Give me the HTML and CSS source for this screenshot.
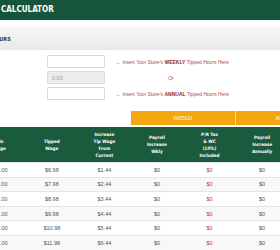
FILE: index.html
```html
<!DOCTYPE html>
<html>
<head>
<meta charset="utf-8">
<link rel="stylesheet" href="styles.css">
</head>
<body>
<div class="page">
  <header class="topbar"><h1 class="title">CALCULATOR</h1></header>
  <section class="band"><h2 class="band-title">HOURS</h2></section>
  <form class="hours">
    <div class="row">
      <input class="field" type="text">
      <span class="hint">&larr; Insert Your Store's <b>WEEKLY</b> Tipped Hours Here</span>
    </div>
    <div class="row">
      <input class="field disabled" type="text" value="0.00" disabled>
      <span class="hint or">Or</span>
    </div>
    <div class="row">
      <input class="field" type="text">
      <span class="hint">&larr; Insert Your Store's <b>ANNUAL</b> Tipped Hours Here</span>
    </div>
  </form>
  <table class="calc">
    <colgroup><col><col><col><col><col><col><col></colgroup>
    <thead>
      <tr class="groups">
        <th class="blank" colspan="3"></th>
        <th class="grp weekly" colspan="2">WEEKLY</th>
        <th class="grp" colspan="2">ANNUALLY</th>
      </tr>
      <tr class="heads">
        <th>Min<br>Wage</th>
        <th>Tipped<br>Wage</th>
        <th>Increase<br>Tip Wage<br>From<br>Current</th>
        <th>Payroll<br>Increase<br>Wkly</th>
        <th>P/R Tax<br>&amp; WC<br>(10%)<br>Included</th>
        <th>Payroll<br>Increase<br>Annually</th>
        <th>P/R Tax<br>&amp; WC<br>(10%)<br>Included</th>
      </tr>
    </thead>
    <tbody>
      <tr><td>$10.00</td><td>$6.98</td><td>$1.44</td><td>$0</td><td class="red">$0</td><td>$0</td><td class="red">$0</td></tr>
      <tr><td>$11.00</td><td>$7.98</td><td>$2.44</td><td>$0</td><td class="red">$0</td><td>$0</td><td class="red">$0</td></tr>
      <tr><td>$12.00</td><td>$8.98</td><td>$3.44</td><td>$0</td><td class="red">$0</td><td>$0</td><td class="red">$0</td></tr>
      <tr><td>$13.00</td><td>$9.98</td><td>$4.44</td><td>$0</td><td class="red">$0</td><td>$0</td><td class="red">$0</td></tr>
      <tr><td>$14.00</td><td>$10.98</td><td>$5.44</td><td>$0</td><td class="red">$0</td><td>$0</td><td class="red">$0</td></tr>
      <tr><td>$15.00</td><td>$11.98</td><td>$6.44</td><td>$0</td><td class="red">$0</td><td>$0</td><td class="red">$0</td></tr>
    </tbody>
  </table>
</div>
</body>
</html>
```

FILE: styles.css
```css
html, body {
  margin: 0;
  padding: 0;
  background: #fff;
  overflow: hidden;
}
body {
  width: 280px;
  height: 250px;
  font-family: "Liberation Sans", Arial, sans-serif;
}
.page {
  margin-left: -27px;
  width: 368px;
}
.topbar {
  height: 20px;
  background: #17553a;
  display: flex;
  align-items: center;
  overflow: hidden;
}
.title {
  margin: 0 0 0 28px;
  color: #fff;
  font-family: "DejaVu Sans Condensed", sans-serif;
  font-weight: bold;
  font-size: 8px;
  line-height: 20px;
  white-space: nowrap;
}
.band {
  margin-top: 7px;
  height: 23px;
  background: linear-gradient(#f6f6f6, #e9e9e9);
  display: flex;
  align-items: center;
}
.band-title {
  margin: 0 0 0 18px;
  font-family: "DejaVu Sans Condensed", sans-serif;
  font-size: 5.5px;
  font-weight: bold;
  color: #333;
  white-space: nowrap;
}
.hours {
  margin: 5px 0 0 74px;
  display: flex;
  flex-direction: column;
  gap: 3px;
}
.row {
  display: flex;
  align-items: center;
  height: 13px;
}
.field {
  box-sizing: border-box;
  width: 58px;
  height: 13px;
  margin: 0;
  padding: 0 4px;
  border: 1px solid #d8d8d8;
  border-radius: 1px;
  background: #fff;
  font-family: "Liberation Sans", Arial, sans-serif;
  font-size: 5.5px;
  color: #888;
}
.field.disabled {
  background: #ececec;
  border-color: #dcdcdc;
  color: #999;
}
.hint {
  margin-left: 11px;
  width: 110px;
  font-size: 5px;
  color: #b34848;
  white-space: nowrap;
}
.hint b {
  color: #8e2a2a;
}
.hint.or {
  text-align: center;
}
.calc {
  margin-top: 11px;
  width: 368px;
  table-layout: fixed;
  border-collapse: collapse;
}
.calc col {
  width: 52.5px;
}
.groups th {
  height: 14px;
  padding: 0;
  border-bottom: 2px solid #fff;
  font-size: 5.5px;
  font-weight: normal;
  color: #fff;
  font-family: "DejaVu Sans Condensed", sans-serif;
}
.groups .blank {
  background: #fff;
}
.groups .grp {
  background: #f4a60e;
}
.groups .weekly {
  border-right: 1px solid #fbd98c;
}
.heads th {
  height: 35px;
  padding: 0;
  background: #1a5a3d;
  color: #fff;
  font-family: "DejaVu Sans Condensed", sans-serif;
  font-weight: bold;
  font-size: 4.6px;
  line-height: 7px;
  vertical-align: middle;
  text-align: center;
}
.calc td {
  height: 13.6px;
  padding: 0;
  border-top: 1px solid #e4e4e4;
  text-align: center;
  font-size: 5.5px;
  color: #555;
}
.calc tbody tr:nth-child(even) td {
  background: #f8f8f8;
}
.calc td.red {
  color: #c0392b;
}
```
